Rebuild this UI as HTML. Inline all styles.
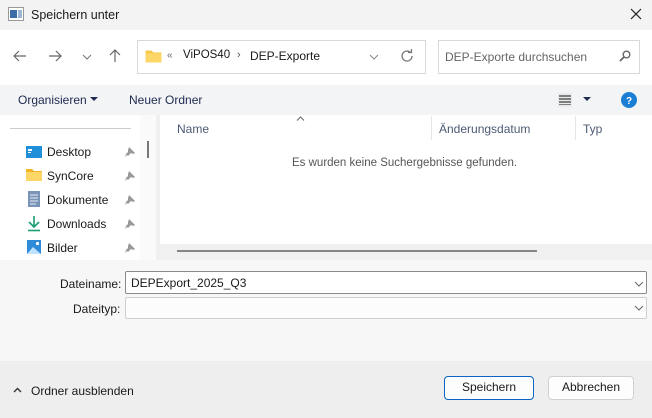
<!DOCTYPE html>
<html><head><meta charset="utf-8"><style>
*{box-sizing:border-box;margin:0;padding:0}
body{width:652px;height:418px;overflow:hidden;font-family:"Liberation Sans","DejaVu Sans",sans-serif;font-size:12px;color:#1a1a1a;background:#f3f3f3;position:relative}
.a{position:absolute}
.t{white-space:nowrap}
</style></head><body>
<div class="a" style="left:0;top:0;width:652px;height:30px;background:#f3f3f3"></div>
<svg class="a" style="left:8px;top:7px" width="16" height="14"><rect x="0.5" y="0.5" width="15" height="13" fill="#fff" stroke="#999"/><rect x="2" y="3" width="7" height="8" fill="#3a6ea5"/><rect x="10" y="3" width="4" height="8" fill="#9bb7d4"/></svg>
<div class="a t" style="left:31px;top:8px;font-size:12.5px">Speichern unter</div>
<svg class="a" style="left:630px;top:8px" width="12" height="12"><path d="M1 1L11 11M11 1L1 11" stroke="#222" stroke-width="1.2"/></svg>
<div class="a" style="left:0;top:30px;width:652px;height:55px;background:#fff"></div>
<svg class="a" style="left:13px;top:50px" width="14" height="12"><path d="M13 6H1M6 1L1 6L6 11" fill="none" stroke="#666" stroke-width="1.2"/></svg>
<svg class="a" style="left:48px;top:50px" width="14" height="12"><path d="M1 6H13M8 1L13 6L8 11" fill="none" stroke="#666" stroke-width="1.2"/></svg>
<svg class="a" style="left:82px;top:54px" width="10" height="6"><path d="M1 1L5 5L9 1" fill="none" stroke="#777" stroke-width="1.1"/></svg>
<svg class="a" style="left:109px;top:49px" width="12" height="14"><path d="M6 13V1M1 6L6 1L11 6" fill="none" stroke="#666" stroke-width="1.2"/></svg>
<div class="a" style="left:137px;top:40px;width:289px;height:34px;border:1px solid #d9d9d9;background:#fff"></div>
<svg class="a" style="left:145px;top:49px" width="17" height="14"><path d="M0.5 1.5h6l2 2h8v10h-16z" fill="#f8c94b"/><rect x="0.5" y="4.5" width="16" height="9" fill="#fcd768"/></svg>
<div class="a t" style="left:167px;top:50px;font-size:10px;color:#666">«</div>
<div class="a t" style="left:183px;top:49px;font-size:11.5px">ViPOS40</div>
<div class="a t" style="left:237px;top:49px;font-size:11px;color:#555">›</div>
<div class="a t" style="left:250px;top:49px">DEP-Exporte</div>
<svg class="a" style="left:369px;top:54px" width="10" height="6"><path d="M1 1L5 5L9 1" fill="none" stroke="#888" stroke-width="1"/></svg>
<svg class="a" style="left:400px;top:49px" width="14" height="14"><path d="M12 7A5 5 0 1 1 10.5 3.5" fill="none" stroke="#777" stroke-width="1.3"/><path d="M8 3.5h3.5V0" fill="none" stroke="#777" stroke-width="1.3"/></svg>
<div class="a" style="left:438px;top:40px;width:202px;height:34px;border:1px solid #d9d9d9;background:#fff"></div>
<div class="a t" style="left:445px;top:50px;color:#666">DEP-Exporte durchsuchen</div>
<svg class="a" style="left:619px;top:50px" width="12" height="12"><circle cx="7.5" cy="4.5" r="3.3" fill="none" stroke="#666" stroke-width="1.4"/><path d="M5 7L1 11" stroke="#666" stroke-width="1.8"/></svg>
<div class="a" style="left:0;top:85px;width:652px;height:30px;background:#f3f4f6"></div>
<div class="a t" style="left:18px;top:93px;color:#1e2a50">Organisieren</div>
<svg class="a" style="left:90px;top:97px" width="8" height="5"><path d="M0 0H8L4 4z" fill="#1e2a50"/></svg>
<div class="a t" style="left:129px;top:93px;color:#1e2a50">Neuer Ordner</div>
<div class="a" style="left:558px;top:93px;width:14px;height:14px;background:#e9eaec"></div>
<svg class="a" style="left:559px;top:95px" width="12" height="10"><path d="M0 1H12M0 4H12M0 7H12M0 10H12" stroke="#111" stroke-width="1"/></svg>
<svg class="a" style="left:583px;top:97px" width="8" height="5"><path d="M0 0H8L4 4z" fill="#1e2a50"/></svg>
<svg class="a" style="left:621px;top:92px" width="16" height="16"><circle cx="8" cy="8" r="8" fill="#1a7fd4"/><text x="8" y="12" font-size="10" font-weight="bold" text-anchor="middle" fill="#fff" font-family="Liberation Sans">?</text></svg>
<div class="a" style="left:0;top:115px;width:140px;height:145px;background:#fff"></div>
<div class="a" style="left:140px;top:115px;width:16px;height:145px;background:#fafafa"></div>
<div class="a" style="left:147px;top:141px;width:2px;height:17px;background:#777"></div>
<div class="a" style="left:156px;top:115px;width:4px;height:145px;background:#f0f0f0"></div>
<div class="a" style="left:160px;top:115px;width:492px;height:145px;background:#fff"></div>
<div class="a" style="left:10px;top:128px;width:121px;height:1px;background:#ccc"></div>
<svg class="a" style="left:26px;top:145px" width="16" height="14"><rect x="0" y="1" width="16" height="12" fill="#1e8fd8"/><rect x="2" y="4" width="4" height="2" fill="#fff"/><rect x="2" y="7" width="3" height="1" fill="#fff"/></svg>
<div class="a t" style="left:47px;top:145px">Desktop</div>
<svg class="a" style="left:26px;top:168px" width="16" height="13"><path d="M0 1h6l2 2h8v10H0z" fill="#f0b429"/><rect x="0" y="4" width="16" height="9" fill="#fcd768"/></svg>
<div class="a t" style="left:47px;top:169px">SynCore</div>
<svg class="a" style="left:28px;top:191px" width="12" height="16"><rect x="0" y="0" width="12" height="16" fill="#7a93b8"/><path d="M2 4H10M2 7H10M2 10H10M2 13H8" stroke="#e8eef6" stroke-width="1"/></svg>
<div class="a t" style="left:47px;top:193px">Dokumente</div>
<svg class="a" style="left:27px;top:215px" width="14" height="17"><path d="M7 1V11M2 7L7 12L12 7" fill="none" stroke="#1a9e72" stroke-width="1.6"/><path d="M1 15.5H13" stroke="#1a9e72" stroke-width="1.6"/></svg>
<div class="a t" style="left:47px;top:217px">Downloads</div>
<svg class="a" style="left:27px;top:240px" width="14" height="14"><rect width="14" height="14" fill="#2f8ad8"/><path d="M0 14L6 7L14 14z" fill="#bfe2ff"/><circle cx="10.5" cy="3.5" r="1.6" fill="#fff"/></svg>
<div class="a t" style="left:47px;top:241px">Bilder</div>
<svg class="a" style="left:125px;top:147px" width="10" height="10" fill="#999"><path d="M4 0L10 6L8 7L6 6L3 9L2 8L0 10L1 7L3 5L3 3z"/></svg>
<svg class="a" style="left:125px;top:171px" width="10" height="10" fill="#999"><path d="M4 0L10 6L8 7L6 6L3 9L2 8L0 10L1 7L3 5L3 3z"/></svg>
<svg class="a" style="left:125px;top:195px" width="10" height="10" fill="#999"><path d="M4 0L10 6L8 7L6 6L3 9L2 8L0 10L1 7L3 5L3 3z"/></svg>
<svg class="a" style="left:125px;top:219px" width="10" height="10" fill="#999"><path d="M4 0L10 6L8 7L6 6L3 9L2 8L0 10L1 7L3 5L3 3z"/></svg>
<svg class="a" style="left:125px;top:243px" width="10" height="10" fill="#999"><path d="M4 0L10 6L8 7L6 6L3 9L2 8L0 10L1 7L3 5L3 3z"/></svg>
<svg class="a" style="left:296px;top:116px" width="9" height="5"><path d="M1 4.5L4.5 1L8 4.5" fill="none" stroke="#666" stroke-width="1"/></svg>
<div class="a t" style="left:177px;top:122px;color:#4c5a75">Name</div>
<div class="a" style="left:431px;top:116px;width:1px;height:24px;background:#e5e5e5"></div>
<div class="a t" style="left:439px;top:122px;color:#4c5a75">Änderungsdatum</div>
<div class="a" style="left:575px;top:116px;width:1px;height:24px;background:#e5e5e5"></div>
<div class="a t" style="left:583px;top:122px;color:#4c5a75">Typ</div>
<div class="a t" style="left:292px;top:157px;font-size:11.5px;color:#555">Es wurden keine Suchergebnisse gefunden.</div>
<div class="a" style="left:160px;top:244px;width:492px;height:16px;background:#f0f0f0"></div>
<div class="a" style="left:177px;top:250px;width:360px;height:2px;background:#858585"></div>
<div class="a" style="left:0;top:260px;width:652px;height:101px;background:#f7f7f7"></div>
<div class="a t" style="left:60px;top:277px">Dateiname:</div>
<div class="a" style="left:125px;top:271px;width:522px;height:23px;background:#fff;border:1px solid #8a8a8a;border-radius:2px"></div>
<div class="a t" style="left:131px;top:276px">DEPExport_2025_Q3</div>
<svg class="a" style="left:634px;top:281px" width="10" height="6"><path d="M1 1L5 5L9 1" fill="none" stroke="#666" stroke-width="1"/></svg>
<div class="a t" style="left:73px;top:302px">Dateityp:</div>
<div class="a" style="left:125px;top:297px;width:522px;height:22px;background:#fcfcfc;border:1px solid #cfcfcf;border-radius:2px"></div>
<svg class="a" style="left:634px;top:305px" width="10" height="6"><path d="M1 1L5 5L9 1" fill="none" stroke="#666" stroke-width="1"/></svg>
<div class="a" style="left:0;top:361px;width:652px;height:57px;background:#eeeeee"></div>
<svg class="a" style="left:13px;top:387px" width="9" height="6"><path d="M1 5L4.5 1.5L8 5" fill="none" stroke="#333" stroke-width="1.4"/></svg>
<div class="a t" style="left:31px;top:384px">Ordner ausblenden</div>
<div class="a" style="left:444px;top:376px;width:90px;height:24px;background:#fdfdfd;border:1px solid #0a66c2;border-radius:4px;text-align:center;line-height:21px">Speichern</div>
<div class="a" style="left:548px;top:376px;width:86px;height:24px;background:#fdfdfd;border:1px solid #d0d0d0;border-radius:4px;text-align:center;line-height:21px">Abbrechen</div>
</body></html>
